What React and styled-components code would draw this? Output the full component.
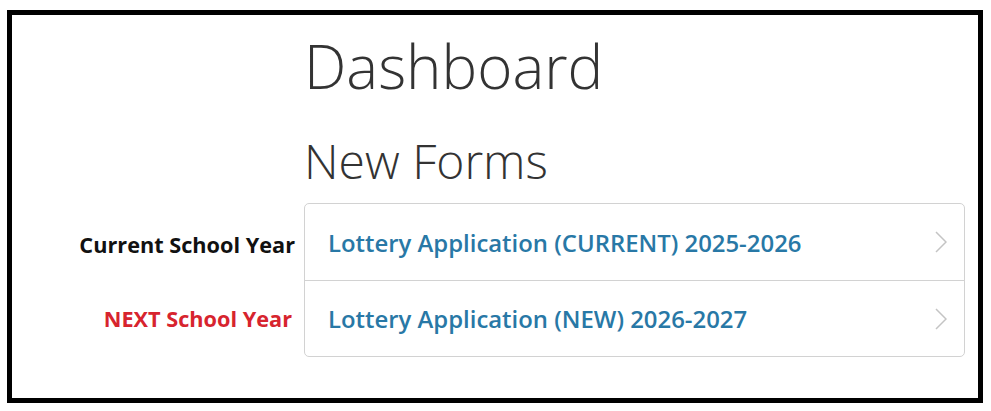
import React from "react";
import styled, { createGlobalStyle } from "styled-components";

const Global = createGlobalStyle`
  html, body { margin: 0; padding: 0; background: #fff; }
  body { font-family: "Open Sans", "Liberation Sans", sans-serif; }
`;

const Frame = styled.div`
  margin: 10px 8px 0 7px;
  height: 383px;
  border: 5px solid #000;
  background: #fff;
  display: flex;
  flex-direction: column;
  padding-right: 13px;
`;

const Header = styled.div`
  padding-left: 292px;
`;

const Heading = styled.h1`
  margin: 0;
  font-weight: 300;
  color: #333;
  font-size: ${(p) => p.$size}px;
  line-height: ${(p) => p.$lh}px;
  margin-top: ${(p) => p.$mt}px;
`;

const FormsGrid = styled.div`
  display: grid;
  grid-template-columns: 292px 1fr;
  margin-top: 9px;
`;

const Labels = styled.div`
  display: flex;
  flex-direction: column;
  padding-top: 1px;
`;

const Label = styled.div`
  height: 76px;
  display: flex;
  align-items: center;
  justify-content: flex-end;
  padding-right: ${(p) => p.$pr}px;
  padding-top: ${(p) => p.$shift}px;
  box-sizing: border-box;
  font-weight: 700;
  font-size: 21.7px;
  color: ${(p) => p.$color};
`;

const Card = styled.div`
  border: 1px solid #d2d2d2;
  border-radius: 5px;
  overflow: hidden;
`;

const Row = styled.a`
  display: flex;
  align-items: center;
  justify-content: space-between;
  height: 76px;
  padding: 0 17px 0 23px;
  box-sizing: border-box;
  text-decoration: none;
  color: #2878a6;
  font-weight: 600;
  font-size: 23.9px;
  & + & { border-top: 1px solid #d2d2d2; }
`;

const Chevron = () => (
  <svg width="12" height="22" viewBox="0 0 12 22" fill="none">
    <path d="M1 1 L11 11 L1 21" stroke="#c4c4c4" strokeWidth="1.5" />
  </svg>
);

export default function App() {
  return (
    <>
      <Global />
      <Frame>
        <Header>
          <Heading $size={60} $lh={82} $mt={10}>Dashboard</Heading>
          <Heading $size={48} $lh={66} $mt={21}>New Forms</Heading>
        </Header>
        <FormsGrid>
          <Labels>
            <Label $color="#111" $shift={4} $pr={9}>Current School Year</Label>
            <Label $color="#d7242e" $shift={0} $pr={12}>NEXT School Year</Label>
          </Labels>
          <Card>
            <Row href="#">
              <span>Lottery Application (CURRENT) 2025-2026</span>
              <Chevron />
            </Row>
            <Row href="#">
              <span>Lottery Application (NEW) 2026-2027</span>
              <Chevron />
            </Row>
          </Card>
        </FormsGrid>
      </Frame>
    </>
  );
}
